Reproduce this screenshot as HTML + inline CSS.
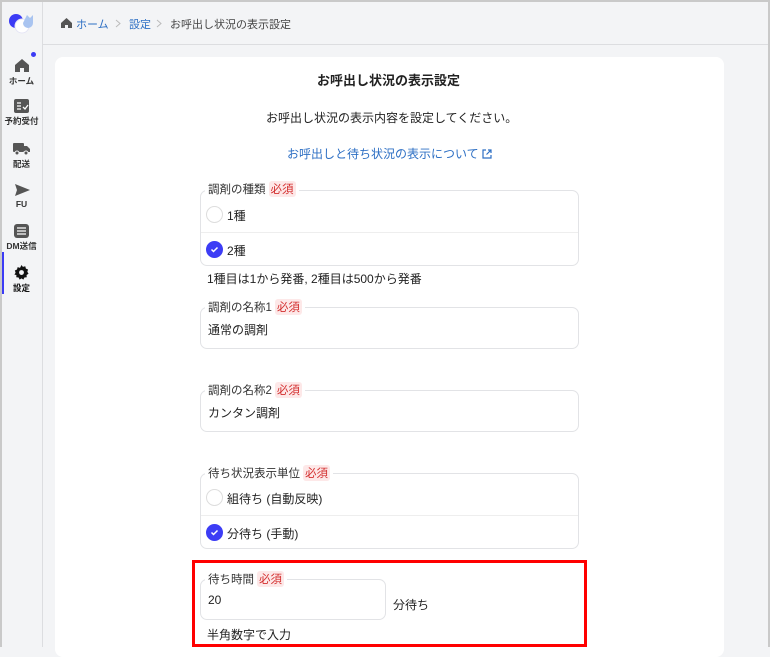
<!DOCTYPE html><html><head><meta charset="utf-8"><style>
*{box-sizing:border-box;margin:0;padding:0}
body{width:770px;height:647px;overflow:hidden;background:#f3f4f6;font-family:"Liberation Sans","Noto Sans CJK JP",sans-serif;color:#222;position:relative}
.frame{position:absolute;left:0;top:0;width:770px;height:647px;border:2px solid #c9c9c9;border-bottom:none;pointer-events:none;z-index:9}
.side{position:absolute;left:0;top:0;width:43px;height:647px;background:#f3f4f6;border-right:1px solid #dcdde0}
.nav{position:absolute;left:0;width:43px;text-align:center;font-size:8.5px;color:#333;font-weight:bold}
.nav svg{display:block;margin:0 auto 2px}
.hdr{position:absolute;left:43px;top:0;right:0;height:45px;border-bottom:1px solid #dcdde0;font-size:11px;color:#444}
.hdr span{position:absolute;top:16px}
.card{position:absolute;left:55px;top:57px;width:669px;height:600px;background:#fff;border-radius:8px}
.t{position:absolute;font-size:12px;color:#222;white-space:nowrap}
.fs{position:absolute;left:200px;width:379px;border:1px solid #e2e3e6;border-radius:7px;background:#fff}
.lg{position:absolute;background:#fff;padding:0 3px;font-size:11.5px;color:#333;white-space:nowrap}
.req{display:inline-block;background:#fde8e8;color:#d32f2f;border-radius:3px;padding:0 2px;margin-left:3px;font-size:11.5px}
.rad{position:absolute;width:17px;height:17px;border-radius:50%;border:1px solid #ddd;background:#fff}
.rad.on{background:#3d3df5;border-color:#3d3df5}
</style></head><body>
<div class="frame"></div>
<div class="side">
<svg style="position:absolute;left:7px;top:12px" width="30" height="22" viewBox="0 0 30 22"><circle cx="9" cy="9" r="7" fill="#3b3bf5"/><circle cx="15" cy="14" r="7" fill="#fff" stroke="#e5e5f5"/><path d="M20 3l3 3 3-3v8a5 5 0 0 1-10 0z" fill="#a9c4f0"/></svg>
<div style="position:absolute;left:31px;top:52px;width:5px;height:5px;border-radius:50%;background:#3b3bf5"></div>
<div class="nav" style="top:58px"><svg width="16" height="15" viewBox="0 0 16 15"><path d="M8 1L1 7v7h5v-4h4v4h5V7z" fill="#555"/></svg>ホーム</div>
<div class="nav" style="top:99px"><svg width="15" height="14" viewBox="0 0 15 14"><rect width="15" height="14" rx="2" fill="#555"/><path d="M3 4h4M3 7h4M3 10h4M9 8l2 2 3-4" stroke="#fff" stroke-width="1.3" fill="none"/></svg>予約受付</div>
<div class="nav" style="top:142px"><svg width="17" height="14" viewBox="0 0 17 14"><rect x="0" y="1" width="11" height="9" rx="1" fill="#555"/><path d="M11 4h3l3 3v3h-6z" fill="#555"/><circle cx="4" cy="11" r="2" fill="#555" stroke="#f3f4f6"/><circle cx="13" cy="11" r="2" fill="#555" stroke="#f3f4f6"/></svg>配送</div>
<div class="nav" style="top:183px"><svg width="16" height="14" viewBox="0 0 16 14"><path d="M1 1l15 6-15 6 2-6z" fill="#555"/></svg>FU</div>
<div class="nav" style="top:224px"><svg width="15" height="14" viewBox="0 0 15 14"><rect width="15" height="14" rx="3" fill="#555"/><path d="M3 4h9M3 7h9M3 10h9" stroke="#fff" stroke-width="1.2"/></svg>DM送信</div>
<div style="position:absolute;left:2px;top:252px;width:2px;height:42px;background:#3b3bf5"></div>
<div class="nav" style="top:265px;color:#111"><svg width="15" height="15" viewBox="0 0 16 16"><path d="M8 0l1.5 2 2.5-.7.7 2.5 2.3 1-.8 2.4 1.3 2.1-2.1 1.3.2 2.5-2.5.2-1.1 2.3-2-1.4-2 1.4-1.1-2.3-2.5-.2.2-2.5L.4 10.3l1.3-2.1L.9 5.8l2.3-1 .7-2.5 2.5.7z" fill="#111"/><circle cx="8" cy="8" r="2.6" fill="#f3f4f6"/></svg>設定</div>
</div>
<div class="hdr">
<svg style="position:absolute;left:18px;top:18px" width="11" height="10" viewBox="0 0 11 10"><path d="M5.5 0L0 5v5h4V7h3v3h4V5z" fill="#555"/></svg>
<span style="left:33px;color:#2d6fc4">ホーム</span>
<svg style="position:absolute;left:72px;top:19px" width="6" height="9" viewBox="0 0 6 9"><path d="M1 1l4 3.5L1 8" stroke="#bbb" fill="none"/></svg>
<span style="left:86px;color:#2d6fc4">設定</span>
<svg style="position:absolute;left:113px;top:19px" width="6" height="9" viewBox="0 0 6 9"><path d="M1 1l4 3.5L1 8" stroke="#bbb" fill="none"/></svg>
<span style="left:127px">お呼出し状況の表示設定</span>
</div>
<div class="card"></div>
<div class="t" style="left:317px;top:70px;font-size:13px;font-weight:bold">お呼出し状況の表示設定</div>
<div class="t" style="left:266px;top:109px">お呼出し状況の表示内容を設定してください。</div>
<div class="t" style="left:287px;top:145px;color:#2d6fc4">お呼出しと待ち状況の表示について <svg width="10" height="10" viewBox="0 0 10 10" style="vertical-align:-1px"><path d="M4 1H1v8h8V6M6 1h3v3M9 1L4.5 5.5" stroke="#2d6fc4" stroke-width="1.2" fill="none"/></svg></div>

<div class="fs" style="top:190px;height:76px"><div style="position:absolute;left:0;right:0;top:41px;border-top:1px solid #eee"></div></div>
<div class="lg" style="left:205px;top:181px">調剤の種類<span class="req">必須</span></div>
<div class="rad" style="left:206px;top:206px"></div><div class="t" style="left:227px;top:207px">1種</div>
<div class="rad on" style="left:206px;top:241px"><svg width="15" height="15" viewBox="0 0 15 15"><path d="M4.5 7.5l2 2 4-4" stroke="#fff" stroke-width="1.5" fill="none"/></svg></div><div class="t" style="left:227px;top:242px">2種</div>
<div class="t" style="left:207px;top:270px">1種目は1から発番, 2種目は500から発番</div>

<div class="fs" style="top:307px;height:42px"></div>
<div class="lg" style="left:205px;top:299px">調剤の名称1<span class="req">必須</span></div>
<div class="t" style="left:208px;top:321px">通常の調剤</div>

<div class="fs" style="top:390px;height:42px"></div>
<div class="lg" style="left:205px;top:382px">調剤の名称2<span class="req">必須</span></div>
<div class="t" style="left:208px;top:404px">カンタン調剤</div>

<div class="fs" style="top:473px;height:76px"><div style="position:absolute;left:0;right:0;top:41px;border-top:1px solid #eee"></div></div>
<div class="lg" style="left:205px;top:465px">待ち状況表示単位<span class="req">必須</span></div>
<div class="rad" style="left:206px;top:489px"></div><div class="t" style="left:227px;top:490px">組待ち (自動反映)</div>
<div class="rad on" style="left:206px;top:524px"><svg width="15" height="15" viewBox="0 0 15 15"><path d="M4.5 7.5l2 2 4-4" stroke="#fff" stroke-width="1.5" fill="none"/></svg></div><div class="t" style="left:227px;top:525px">分待ち (手動)</div>

<div class="fs" style="top:579px;width:186px;height:41px"></div>
<div class="lg" style="left:205px;top:571px">待ち時間<span class="req">必須</span></div>
<div class="t" style="left:208px;top:593px">20</div>
<div class="t" style="left:393px;top:596px">分待ち</div>
<div class="t" style="left:207px;top:626px">半角数字で入力</div>
<div style="position:absolute;left:192px;top:560px;width:395px;height:87px;border:3.5px solid #f00;border-bottom-width:3px"></div>
</body></html>
